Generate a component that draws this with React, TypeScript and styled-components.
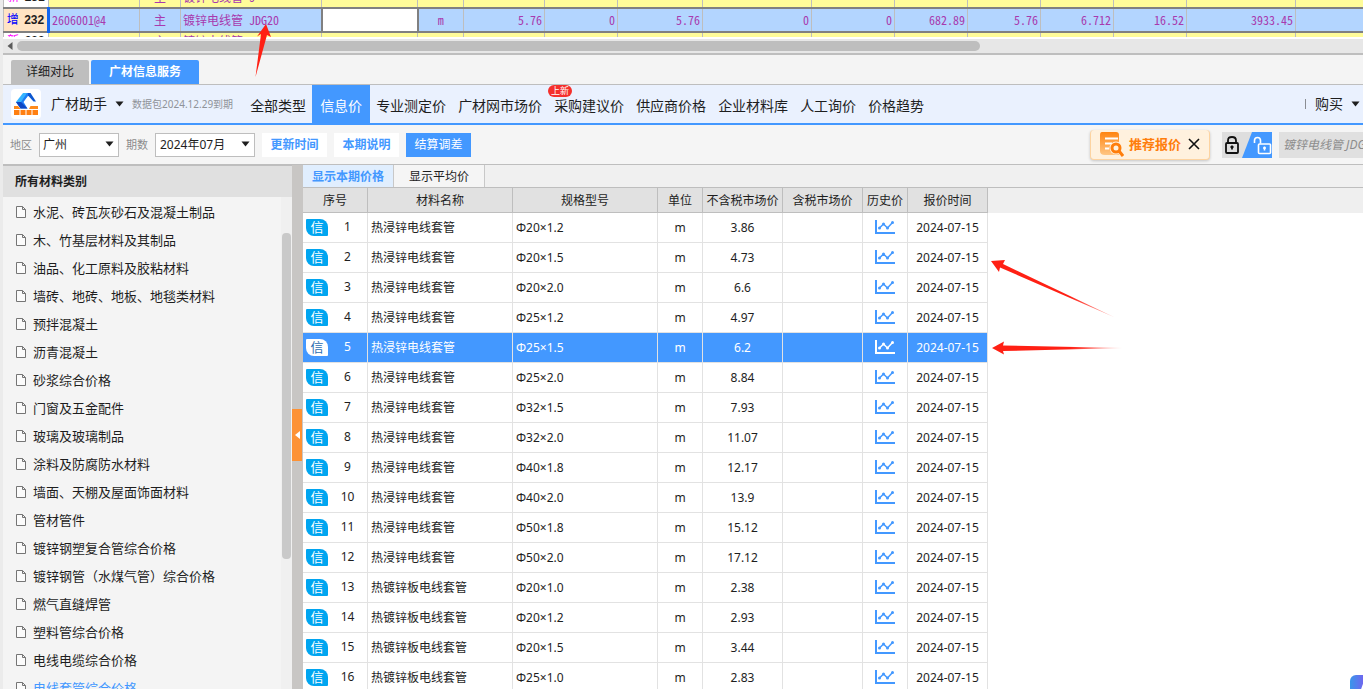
import React from 'react';
import styled, { createGlobalStyle } from 'styled-components';

const BLUE = '#4398ff';
const LINE = '#bebebe';
const UI = '"Noto Sans", "Noto Sans CJK SC", sans-serif';

const GlobalStyle = createGlobalStyle`
  * { box-sizing: border-box; }
  body { margin: 0; background: #f4f4f4; font-family: ${UI}; color: #1e1e1e; }
  button, input, select { font: inherit; color: inherit; margin: 0; }
`;

const Page = styled.div`
  position: relative;
  display: flex;
  flex-direction: column;
  height: 100vh;
  overflow: hidden;
  border-left: 3px solid #ebebeb;
  font-size: 12px;
  line-height: 16px;
`;

/* ---------- bill sheet ---------- */

const SheetWindow = styled.div`
  flex: none;
  height: 39px;
  padding-bottom: 2px;
  background: #fff;
`;

const SheetClip = styled.div`
  display: flex;
  align-items: center;
  height: 37px;
  overflow: hidden;
`;

const Sheet = styled.table`
  flex: none;
  width: 1500px;
  margin-top: 3px;
  table-layout: fixed;
  border-collapse: collapse;
  font-family: "Noto Sans Mono CJK SC", "Noto Sans CJK SC", monospace;
  color: #a83aae;
`;

const SheetRow = styled.tr<{ $selected?: boolean }>`
  height: ${p => (p.$selected ? 24 : 22)}px;
  background: ${p => (p.$selected ? '#b3d5ff' : '#fffc99')};
  vertical-align: middle;
  &:last-child { vertical-align: top; }
  ${p => p.$selected && 'border-top: 2px solid #808080; border-bottom: 2px solid #808080;'}
`;

const SheetHead = styled.th<{ $color: string; $selected?: boolean }>`
  padding: 0;
  background: ${p => (p.$selected ? '#ffe4c4' : '#fff')};
  border-left: 1px solid ${LINE};
  border-right: ${p => (p.$selected ? '3px solid #1266f0' : `1px solid ${LINE}`)};
  color: #1e1e1e;
  font-family: "Liberation Sans", "Noto Sans CJK SC", sans-serif;
  font-weight: bold;
  white-space: nowrap;
  span { color: ${p => p.$color}; font-weight: normal; margin-right: 2px; }
`;

const SheetCell = styled.td<{ $align?: string; $editing?: boolean }>`
  padding: 0 2px;
  border-right: 1px solid ${LINE};
  text-align: ${p => p.$align || 'left'};
  line-height: 16px;
  white-space: nowrap;
  ${p => p.$editing && 'background: #fff; border: 2px solid #808080;'}
`;

const HScroll = styled.div`
  flex: none;
  display: flex;
  align-items: center;
  gap: 4px;
  height: 16px;
  padding: 0 0 1px 4px;
  background: #e7e7e7;
  border-bottom: 2px solid ${LINE};
`;

const HThumb = styled.div`
  width: 71%;
  height: 10px;
  border-radius: 5px;
  background: ${LINE};
`;

/* ---------- service tabs ---------- */

const ServiceTabs = styled.div`
  flex: none;
  display: flex;
  align-items: flex-end;
  gap: 2px;
  height: 30px;
  padding-left: 8px;
  border-bottom: 1px solid ${LINE};
`;

const ServiceTab = styled.button<{ $active?: boolean }>`
  height: 24px;
  padding: 0 ${p => (p.$active ? 18 : 15)}px;
  border: 0;
  border-radius: 2px 2px 0 0;
  background: ${p => (p.$active ? BLUE : LINE)};
  color: ${p => (p.$active ? '#fff' : '#1e1e1e')};
  font-weight: ${p => (p.$active ? 'bold' : 'normal')};
`;

/* ---------- navigation ---------- */

const Nav = styled.nav`
  flex: none;
  display: flex;
  align-items: center;
  height: 40px;
  padding-left: 8px;
  background: #eaf1fe;
  border-bottom: 2px solid ${BLUE};
  font-size: 14px;
`;

const LogoTile = styled.span`
  display: flex;
  width: 30px;
  height: 30px;
  margin-right: 10px;
  border-radius: 4px;
  background: #fff;
`;

const MenuButton = styled.button`
  display: flex;
  align-items: center;
  gap: 8px;
  padding: 0;
  border: 0;
  background: none;
  white-space: nowrap;
`;

const Expiry = styled.span`
  margin: 0 11px 0 8px;
  font-size: 10px;
  color: #8f9399;
  white-space: nowrap;
`;

const NavLink = styled.a<{ $active?: boolean }>`
  position: relative;
  display: flex;
  align-items: center;
  align-self: stretch;
  padding: 4px ${p => (p.$active ? 8 : 6)}px 0;
  background: ${p => (p.$active ? BLUE : 'transparent')};
  color: ${p => (p.$active ? '#fff' : '#1e1e1e')};
  text-decoration: none;
  white-space: nowrap;
`;

const NewBadge = styled.span`
  position: absolute;
  top: 0;
  left: 0;
  width: 24px;
  border-radius: 6px;
  background: #f5302c;
  color: #fff;
  font-size: 9px;
  line-height: 12px;
  text-align: center;
`;

const Buy = styled.div`
  display: flex;
  align-items: center;
  margin-left: auto;
  padding-right: 3px;
  &::before {
    content: '';
    width: 1px;
    height: 10px;
    margin-right: 9px;
    background: #8a8d93;
  }
`;

/* ---------- filter bar ---------- */

const FilterBar = styled.div`
  flex: none;
  display: flex;
  align-items: center;
  gap: 7px;
  height: 40px;
  padding-left: 7px;
  background: #f5f5f5;
  border-bottom: 1px solid ${LINE};
`;

const Field = styled.label`
  display: flex;
  align-items: center;
  gap: 7px;
  font-size: 11px;
  color: #8c8c8c;
  white-space: nowrap;
`;

const SelectBox = styled.span<{ $width: number }>`
  position: relative;
  display: flex;
  width: ${p => p.$width}px;
  svg { position: absolute; right: 5px; top: 8px; pointer-events: none; }
`;

const Select = styled.select<{ $pad: number }>`
  appearance: none;
  width: 100%;
  height: 24px;
  padding: 0 0 0 ${p => p.$pad}px;
  border: 1px solid ${LINE};
  border-radius: 0;
  background: #fff;
  color: #1e1e1e;
  font-size: 12px;
`;

const FilterButton = styled.button<{ $solid?: boolean }>`
  width: 65px;
  height: 24px;
  padding: 0;
  border: 0;
  background: ${p => (p.$solid ? BLUE : '#fff')};
  color: ${p => (p.$solid ? '#fff' : BLUE)};
  font-weight: ${p => (p.$solid ? 'normal' : 'bold')};
`;

const IconButton = styled.button`
  display: flex;
  padding: 0;
  border: 0;
  background: none;
`;

const Promo = styled.div`
  display: flex;
  align-items: center;
  gap: 5px;
  height: 30px;
  margin-left: auto;
  padding: 0 9px 0 8px;
  border: 1px solid #fdd3a0;
  border-top: 0;
  border-radius: 4px;
  background: #fff1de;
  box-shadow: 0 1px 3px rgba(0, 0, 0, 0.2);
  color: #ff7e0c;
  font-size: 13px;
  font-weight: bold;
  white-space: nowrap;
  ${IconButton} { margin-left: 2px; }
`;

const LockSwitch = styled(IconButton)`
  width: 50px;
  height: 26px;
  margin-left: 5px;
  background: #dedede;
`;

const Search = styled.input`
  width: 84px;
  height: 26px;
  padding: 0 0 0 4px;
  border: 0;
  border-radius: 0;
  background: #e0e0e0;
  font-style: italic;
  &::placeholder { color: #8c8c8c; opacity: 1; }
`;

/* ---------- body ---------- */

const Body = styled.div`
  flex: 1;
  display: flex;
  min-height: 0;
`;

const Sidebar = styled.aside`
  flex: none;
  display: flex;
  flex-direction: column;
  width: 289px;
  background: #f4f4f4;
`;

const SideTitle = styled.h2`
  flex: none;
  margin: 0;
  padding: 0 12px;
  border-top: 1px solid ${LINE};
  background: #e0e0e0;
  font-size: 12px;
  line-height: 31px;
`;

const SideScroll = styled.div`
  flex: 1;
  display: flex;
  min-height: 0;
  overflow: hidden;
`;

const CategoryList = styled.ul`
  flex: 1;
  margin: 0;
  padding: 1px 0 0 12px;
  list-style: none;
`;

const Category = styled.a<{ $active?: boolean }>`
  display: flex;
  align-items: center;
  gap: 6px;
  height: 28px;
  color: ${p => (p.$active ? BLUE : '#1e1e1e')};
  font-size: 13px;
  text-decoration: none;
  white-space: nowrap;
`;

const VTrack = styled.div`
  width: 11px;
  padding: 36px 1px 0;
  background: #f0f0f0;
`;

const VThumb = styled.div`
  height: 326px;
  border-radius: 4px;
  background: #c9c9c9;
`;

const Splitter = styled.div`
  flex: none;
  display: flex;
  align-items: center;
  width: 11px;
  padding-top: 16px;
  background: #c8c6c4;
`;

const SplitHandle = styled(IconButton)`
  align-items: center;
  justify-content: center;
  width: 10px;
  height: 52px;
  background: #fd9235;
`;

const Content = styled.main`
  position: relative;
  flex: 1;
  min-width: 0;
  overflow: hidden;
  background: #fff;
`;

const PriceTabs = styled.div`
  display: flex;
  height: 23px;
  background: #f0f0f0;
  border-bottom: 1px solid ${LINE};
`;

const PriceTab = styled.button<{ $active?: boolean }>`
  width: 91px;
  padding: 2px 0 0;
  border: 0;
  border-right: 1px solid #c8c8c8;
  background: ${p => (p.$active ? '#e0eefe' : '#f5f5f5')};
  color: ${p => (p.$active ? BLUE : '#1e1e1e')};
  font-weight: ${p => (p.$active ? 'bold' : 'normal')};
`;

const TableArea = styled.div`
  background: linear-gradient(#efefef 25px, #fff 25px);
`;

const PriceTable = styled.table`
  width: 685px;
  table-layout: fixed;
  border-collapse: separate;
  border-spacing: 0;
`;

const HeadCell = styled.th`
  height: 25px;
  padding: 2px 0 0;
  border-right: 1px solid ${LINE};
  border-bottom: 1px solid ${LINE};
  background: #e1e1e1;
  font-weight: normal;
  white-space: nowrap;
`;

const PriceRow = styled.tr<{ $selected?: boolean }>`
  background: ${p => (p.$selected ? BLUE : '#fff')};
  color: ${p => (p.$selected ? '#fff' : '#1e1e1e')};
`;

const Cell = styled.td<{ $left?: boolean }>`
  height: 30px;
  padding: 0 3px;
  border-right: 1px solid #e2e2e2;
  border-bottom: 1px solid #e2e2e2;
  text-align: ${p => (p.$left ? 'left' : 'center')};
  white-space: nowrap;
  svg { display: block; margin: 0 auto 2px; }
`;

const IndexCell = styled.div`
  display: flex;
  align-items: center;
  padding-bottom: 1px;
`;

const InfoTag = styled.span<{ $selected?: boolean }>`
  width: 22px;
  height: 17px;
  border-radius: 1px 8px 1px 8px;
  background: ${p => (p.$selected ? '#fff' : '#00a5f0')};
  color: ${p => (p.$selected ? '#2a6cb0' : '#fff')};
  font-size: 13px;
  line-height: 17px;
  text-align: center;
`;

const IndexNumber = styled.span`
  flex: 1;
  padding-left: 3px;
  text-align: center;
`;

const Assistant = styled.button`
  position: absolute;
  right: -19px;
  bottom: -18px;
  width: 32px;
  height: 32px;
  padding: 6px 10px;
  border: 0;
  border-radius: 6px;
  background: linear-gradient(90deg, #3a96ea, #7a5cf0 50%);
`;

const Annotations = styled.svg`
  position: absolute;
  left: -3px;
  top: 0;
  pointer-events: none;
`;

/* ---------- drawings ---------- */

const Caret = () => (
  <svg width="9" height="6" viewBox="0 0 9 6" aria-hidden="true">
    <path d="M0.5 0.5h8L4.5 5.5z" fill="#1e1e1e" />
  </svg>
);

const Logo = () => (
  <svg width="30" height="30" viewBox="0 0 30 30" aria-hidden="true">
    <path d="M12 4h7l-7 9h-7z" fill="#35b4ff" />
    <path d="M16 4h3l-6.500 9 4 6.500h-7l-4.500-6.500h5z" fill="#1f7df5" />
    <path d="M5 13h5l6.500 6.500h-7z" fill="#0d47c4" />
    <path d="M17 4h2.500l5.500 8.500h-2.500l-5.500-6z" fill="#0d57d0" />
    <path d="M3 17h4l2.500 3h-6.500zM19.500 17h7.500v3h-9z" fill="#ff8a1a" />
    <path d="M3 21h5.500v5h-5.500zM9.500 21h5v5h-5zM15.500 21h5v5h-5zM21.500 21h5.500v5h-5.500z" fill="#ff7f11" />
  </svg>
);

const PromoIcon = () => (
  <svg width="25" height="25" viewBox="0 0 25 25" aria-hidden="true">
    <defs>
      <linearGradient id="promoFill" x1="0" y1="0" x2="0" y2="1">
        <stop offset="0" stopColor="#ff8410" />
        <stop offset="1" stopColor="#ffc684" />
      </linearGradient>
    </defs>
    <path d="M3 0h14q3 0 3 3v20h-14q-5 0-5-4v-16q0-3 2-3z" fill="url(#promoFill)" />
    <path d="M6 6.500h13M6 11.500h7M6 16.500h4" stroke="#fff" strokeWidth="2.200" />
    <circle cx="17" cy="16" r="6.500" fill="#fff1de" />
    <circle cx="17" cy="16" r="4" fill="none" stroke="#ff7e0c" strokeWidth="3" />
    <path d="M20 19l4 5" stroke="#ff7e0c" strokeWidth="3" />
  </svg>
);

const CloseIcon = () => (
  <svg width="12" height="12" viewBox="0 0 12 12" aria-hidden="true">
    <path d="M1 1l10 10M11 1L1 11" stroke="#111" strokeWidth="1.600" />
  </svg>
);

const LockPair = () => (
  <svg width="50" height="26" viewBox="0 0 50 26" aria-hidden="true">
    <path d="M30 0h20v26h-30z" fill={BLUE} />
    <rect x="4" y="11" width="12" height="10" rx="1" fill="none" stroke="#111" strokeWidth="1.800" />
    <path d="M6 11v-2.500q0-3.500 4-3.500t4 3.500v2.500" fill="none" stroke="#111" strokeWidth="1.800" />
    <path d="M10 13.500v4M8.500 15h3" stroke="#111" strokeWidth="1.800" />
    <rect x="36.500" y="12" width="12" height="9.500" rx="1" fill="none" stroke="#fff" strokeWidth="1.600" />
    <path d="M32.500 11v-2.500q0-3 3-3t3 3v3" fill="none" stroke="#fff" strokeWidth="1.600" />
    <path d="M42.500 14.500v4M41 16h3" stroke="#fff" strokeWidth="1.600" />
  </svg>
);

const DocIcon = () => (
  <svg width="12" height="14" viewBox="0 0 12 14" aria-hidden="true">
    <path d="M1.500 1.500h6l3 3v8h-9zM7.500 1.500v3h3" fill="#fbfbfb" stroke="#757575" />
  </svg>
);

const ChartIcon = ({ color }: { color: string }) => (
  <svg width="20" height="14" viewBox="0 0 20 14" role="img" aria-label="历史价">
    <path d="M1 0v13h19" fill="none" stroke={color} strokeWidth="2" />
    <path d="M4.500 8l4-4 4 4 5-5.500" fill="none" stroke={color} strokeWidth="1.500" />
    <g fill={color}>
      <circle cx="4.500" cy="8" r="1.500" />
      <circle cx="8.500" cy="4" r="1.500" />
      <circle cx="12.500" cy="8" r="1.500" />
      <circle cx="17.500" cy="2.500" r="1.500" />
    </g>
  </svg>
);

/* ---------- data ---------- */

const sheetWidths = [45, 91, 41, 141, 96, 46, 81, 73, 85, 109, 83, 73, 73, 73, 73, 109];
const sheetNumbers = ['5.76', '0', '5.76', '0', '0', '682.89', '5.76', '6.712', '16.52', '3933.45'];
const restWidth = 1500 - sheetWidths.reduce((a, b) => a + b, 0);

const neighbour = (mark: string, no: string) => (
  <SheetRow>
    <SheetHead $color="#ff00ff" scope="row"><span>{mark}</span> {no}</SheetHead>
    <SheetCell />
    <SheetCell $align="center">主</SheetCell>
    <SheetCell>镀锌电线管 J</SheetCell>
    <SheetCell />
    <SheetCell />
    {sheetNumbers.map((_, i) => <SheetCell key={i} />)}
    <SheetCell />
  </SheetRow>
);

const navItems = ['全部类型', '信息价', '专业测定价', '广材网市场价', '采购建议价', '供应商价格', '企业材料库', '人工询价', '价格趋势'];

const categories = [
  '水泥、砖瓦灰砂石及混凝土制品', '木、竹基层材料及其制品', '油品、化工原料及胶粘材料',
  '墙砖、地砖、地板、地毯类材料', '预拌混凝土', '沥青混凝土', '砂浆综合价格', '门窗及五金配件',
  '玻璃及玻璃制品', '涂料及防腐防水材料', '墙面、天棚及屋面饰面材料', '管材管件',
  '镀锌钢塑复合管综合价格', '镀锌钢管（水煤气管）综合价格', '燃气直缝焊管', '塑料管综合价格',
  '电线电缆综合价格', '电线套管综合价格',
];

const columns: [string, number][] = [
  ['序号', 65], ['材料名称', 145], ['规格型号', 145], ['单位', 45], ['不含税市场价', 80],
  ['含税市场价', 80], ['历史价', 45], ['报价时间', 80],
];

const A = '热浸锌电线套管';
const B = '热镀锌板电线套管';
const prices: [string, string, string][] = [
  [A, 'Φ20×1.2', '3.86'], [A, 'Φ20×1.5', '4.73'], [A, 'Φ20×2.0', '6.6'], [A, 'Φ25×1.2', '4.97'],
  [A, 'Φ25×1.5', '6.2'], [A, 'Φ25×2.0', '8.84'], [A, 'Φ32×1.5', '7.93'], [A, 'Φ32×2.0', '11.07'],
  [A, 'Φ40×1.8', '12.17'], [A, 'Φ40×2.0', '13.9'], [A, 'Φ50×1.8', '15.12'], [A, 'Φ50×2.0', '17.12'],
  [B, 'Φ20×1.0', '2.38'], [B, 'Φ20×1.2', '2.93'], [B, 'Φ20×1.5', '3.44'], [B, 'Φ25×1.0', '2.83'],
];

export default function App() {
  return (
    <>
      <GlobalStyle />
      <Page>
        <SheetWindow>
          <SheetClip>
            <Sheet>
              <colgroup>
                {[...sheetWidths, restWidth].map((w, i) => <col key={i} width={w} />)}
              </colgroup>
              <tbody>
                {neighbour('新', '231')}
                <SheetRow $selected>
                  <SheetHead $selected $color="#0000ff" scope="row"><span>增</span> 232</SheetHead>
                  <SheetCell>2606001@4</SheetCell>
                  <SheetCell $align="center">主</SheetCell>
                  <SheetCell>镀锌电线管 JDG20</SheetCell>
                  <SheetCell $editing />
                  <SheetCell $align="center">m</SheetCell>
                  {sheetNumbers.map((n, i) => <SheetCell key={i} $align="right">{n}</SheetCell>)}
                  <SheetCell />
                </SheetRow>
                {neighbour('新', '233')}
              </tbody>
            </Sheet>
          </SheetClip>
        </SheetWindow>
        <HScroll>
          <svg width="6" height="8" viewBox="0 0 6 8" aria-hidden="true"><path d="M5.500 0v8L0.500 4z" fill="#5c5c5c" /></svg>
          <HThumb />
        </HScroll>

        <ServiceTabs>
          <ServiceTab>详细对比</ServiceTab>
          <ServiceTab $active>广材信息服务</ServiceTab>
        </ServiceTabs>

        <Nav>
          <LogoTile><Logo /></LogoTile>
          <MenuButton>广材助手<Caret /></MenuButton>
          <Expiry>数据包2024.12.29到期</Expiry>
          {navItems.map(item => (
            <NavLink key={item} href="#" $active={item === '信息价'}>
              {item}
              {item === '采购建议价' && <NewBadge>上新</NewBadge>}
            </NavLink>
          ))}
          <Buy><MenuButton>购买<Caret /></MenuButton></Buy>
        </Nav>

        <FilterBar>
          <Field>
            地区
            <SelectBox $width={80}>
              <Select $pad={3}><option>广州</option></Select>
              <Caret />
            </SelectBox>
          </Field>
          <Field>
            期数
            <SelectBox $width={100}>
              <Select $pad={4}><option>2024年07月</option></Select>
              <Caret />
            </SelectBox>
          </Field>
          <FilterButton>更新时间</FilterButton>
          <FilterButton>本期说明</FilterButton>
          <FilterButton $solid>结算调差</FilterButton>
          <Promo>
            <PromoIcon />
            推荐报价
            <IconButton aria-label="关闭"><CloseIcon /></IconButton>
          </Promo>
          <LockSwitch aria-label="锁定"><LockPair /></LockSwitch>
          <Search aria-label="搜索材料" placeholder="镀锌电线管 JDG20" />
        </FilterBar>

        <Body>
          <Sidebar>
            <SideTitle>所有材料类别</SideTitle>
            <SideScroll>
              <CategoryList>
                {categories.map(c => (
                  <li key={c}>
                    <Category href="#" $active={c === '电线套管综合价格'}><DocIcon />{c}</Category>
                  </li>
                ))}
              </CategoryList>
              <VTrack><VThumb /></VTrack>
            </SideScroll>
          </Sidebar>
          <Splitter>
            <SplitHandle aria-label="收起">
              <svg width="5" height="8" viewBox="0 0 5 8" aria-hidden="true"><path d="M5 0v8L0 4z" fill="#fff" /></svg>
            </SplitHandle>
          </Splitter>
          <Content>
            <PriceTabs>
              <PriceTab $active>显示本期价格</PriceTab>
              <PriceTab>显示平均价</PriceTab>
            </PriceTabs>
            <TableArea>
              <PriceTable>
                <colgroup>
                  {columns.map(([name, w]) => <col key={name} width={w} />)}
                </colgroup>
                <thead>
                  <tr>{columns.map(([name]) => <HeadCell key={name} scope="col">{name}</HeadCell>)}</tr>
                </thead>
                <tbody>
                  {prices.map(([name, spec, price], i) => {
                    const selected = i === 4;
                    return (
                      <PriceRow key={i} $selected={selected}>
                        <Cell>
                          <IndexCell>
                            <InfoTag $selected={selected}>信</InfoTag>
                            <IndexNumber>{i + 1}</IndexNumber>
                          </IndexCell>
                        </Cell>
                        <Cell $left>{name}</Cell>
                        <Cell $left>{spec}</Cell>
                        <Cell>m</Cell>
                        <Cell>{price}</Cell>
                        <Cell />
                        <Cell><ChartIcon color={selected ? '#fff' : BLUE} /></Cell>
                        <Cell>2024-07-15</Cell>
                      </PriceRow>
                    );
                  })}
                </tbody>
              </PriceTable>
            </TableArea>
            <Assistant aria-label="助手">
              <svg width="12" height="20" viewBox="0 0 12 20" aria-hidden="true"><path d="M1 12L5 1h3l4 11" fill="none" stroke="#fff" strokeWidth="2.500" /></svg>
            </Assistant>
          </Content>
        </Body>

        <Annotations width="1130" height="360" viewBox="0 0 1130 360" aria-hidden="true">
          <defs>
            <linearGradient id="fade" gradientUnits="userSpaceOnUse" x1="1070" y1="0" x2="1123" y2="0">
              <stop offset="0" stopColor="#ff2014" />
              <stop offset="1" stopColor="#ff2014" stopOpacity="0.15" />
            </linearGradient>
          </defs>
          <path d="M266 24L271 37L267 35L255.500 77L261 34L257 36.500z" fill="#ff2014" />
          <path d="M991 261L1005 260L1003 264L1115 317.500L1000 267.500L999 272z" fill="url(#fade)" />
          <path d="M992 348L1004 341.500L1003 345.500L1123 348L1003 351L1004 354.500z" fill="url(#fade)" />
        </Annotations>
      </Page>
    </>
  );
}
